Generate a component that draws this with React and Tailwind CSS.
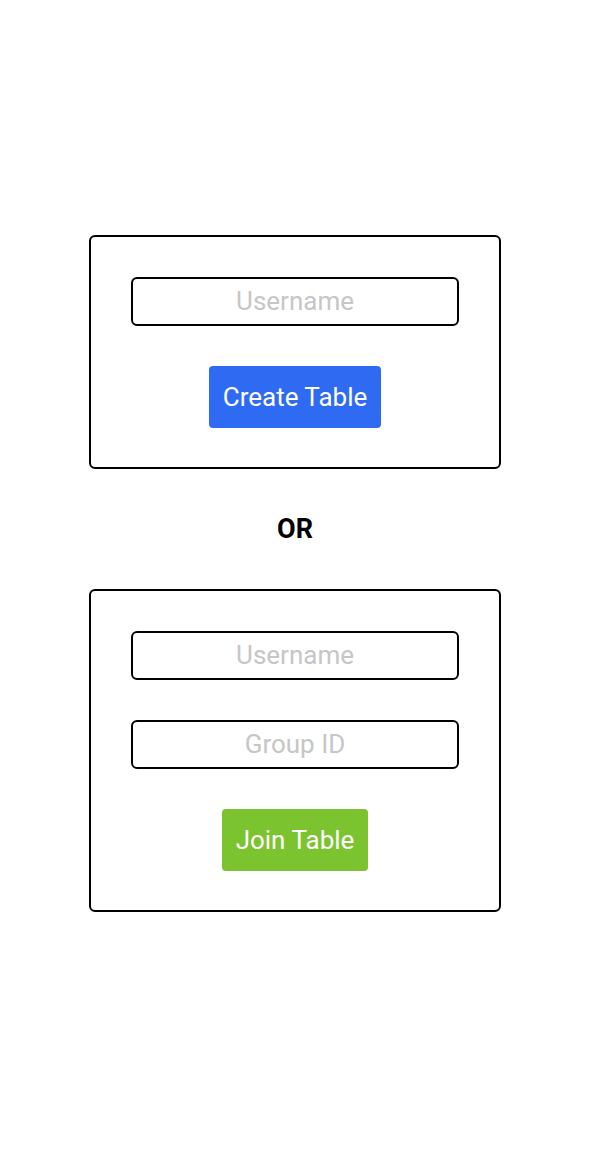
export default function App() {
  const font = { fontFamily: "Roboto, 'Noto Sans', sans-serif" };
  const inputCls =
    "w-full h-[49px] border-2 border-black rounded-[6px] text-center text-[26px] text-black placeholder:text-[#c6c6c6] outline-none bg-white";
  return (
    <div
      className="w-[590px] h-[1150px] bg-white flex flex-col items-center justify-center pb-[4px]"
      style={font}
    >
      <div className="w-[412px] border-2 border-black rounded-[6px] px-[40px] pt-[40px] pb-[39px] flex flex-col items-center gap-[40px]">
        <input className={inputCls} placeholder="Username" />
        <button className="h-[62px] px-[14px] rounded-[4px] bg-[#2f6bf2] text-white text-[26px] leading-none">
          Create Table
        </button>
      </div>
      <div className="h-[120px] pt-[2px] flex items-center justify-center text-[27px] font-bold text-black">
        OR
      </div>
      <div className="w-[412px] border-2 border-black rounded-[6px] px-[40px] pt-[40px] pb-[39px] flex flex-col items-center gap-[40px]">
        <input className={inputCls} placeholder="Username" />
        <input className={inputCls} placeholder="Group ID" />
        <button className="h-[62px] px-[14px] rounded-[4px] bg-[#7bc42f] text-white text-[26px] leading-none">
          Join Table
        </button>
      </div>
    </div>
  );
}
